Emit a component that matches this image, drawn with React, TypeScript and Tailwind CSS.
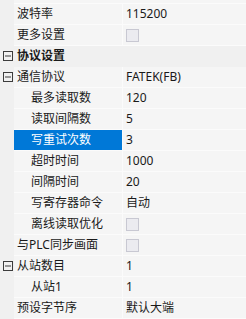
import React from 'react';

type Row = {
  label: string;
  value?: string;
  check?: boolean;
  indent?: number;
  expander?: boolean;
  category?: boolean;
  selected?: boolean;
};

const rows: Row[] = [
  { label: '波特率', value: '115200' },
  { label: '更多设置', check: true },
  { label: '协议设置', category: true, expander: true },
  { label: '通信协议', value: 'FATEK(FB)', expander: true },
  { label: '最多读取数', value: '120', indent: 1 },
  { label: '读取间隔数', value: '5', indent: 1 },
  { label: '写重试次数', value: '3', indent: 1, selected: true },
  { label: '超时时间', value: '1000', indent: 1 },
  { label: '间隔时间', value: '20', indent: 1 },
  { label: '写寄存器命令', value: '自动', indent: 1 },
  { label: '离线读取优化', check: true, indent: 1 },
  { label: '与PLC同步画面', check: true },
  { label: '从站数目', value: '1', expander: true },
  { label: '从站1', value: '1', indent: 1 },
  { label: '预设字节序', value: '默认大端' },
];

function Expander() {
  return (
    <svg width="10" height="10" viewBox="0 0 10 10" className="block">
      <rect x="0.5" y="0.5" width="9" height="9" fill="none" stroke="#3c3c3c" strokeWidth="1" />
      <line x1="2" y1="5" x2="8" y2="5" stroke="#3c3c3c" strokeWidth="1" />
    </svg>
  );
}

function Check() {
  return <div className="w-[13px] h-[13px] border border-[#c8c8d2] bg-[#ebebf0]" />;
}

export default function App() {
  return (
    <div
      className="w-[246px] h-[319px] overflow-hidden bg-[#f5f5f5] text-[12px] leading-none text-[#1a1a1a]"
      style={{ fontFamily: '"Noto Sans", "Noto Sans CJK SC", sans-serif' }}
    >
      <div className="flex h-[4px]">
        <div className="w-[14px] bg-[#f0f0f0]" />
        <div className="flex-1 border-b border-[#fbfbfb]" />
      </div>
      {rows.map((r) => (
        <div key={r.label} className="flex h-[21px]">
          <div className="w-[14px] bg-[#f0f0f0] flex items-center pl-[3px] pb-px">
            {r.expander && <Expander />}
          </div>
          {r.category ? (
            <div className="flex-1 flex items-center bg-[#f0f0f0] border-b border-[#f0f0f0] pl-[3px] font-bold">
              {r.label}
            </div>
          ) : (
            <div className="flex-1 flex border-b border-[#fbfbfb]">
              <div
                className={`w-[109px] flex items-center border-r border-[#fbfbfb] ${
                  r.indent ? 'pl-[17px]' : 'pl-[3px]'
                } ${r.selected ? 'bg-[#0078d7] text-white' : ''}`}
              >
                {r.label}
              </div>
              <div className="flex-1 flex items-center pl-[3px]">
                {r.check ? <Check /> : r.value}
              </div>
            </div>
          )}
        </div>
      ))}
    </div>
  );
}
